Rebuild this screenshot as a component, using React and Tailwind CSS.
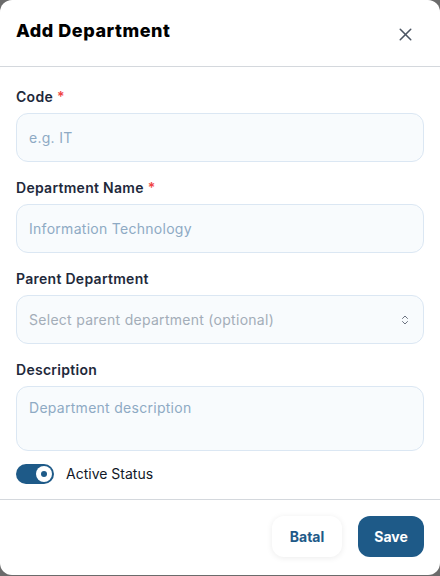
import React, { useState } from "react";
import { X, ChevronsUpDown } from "lucide-react";

const Label = ({ children, required }) => (
  <label className="block text-[14px] font-semibold tracking-[0.02em] text-[#1e293b] leading-5">
    {children}
    {required && <span className="ml-1 text-[#ef4444]">*</span>}
  </label>
);

const inputCls =
  "mt-1.5 w-full h-[49px] rounded-xl border border-[#dbe7f3] bg-[#f8fbfd] px-3 text-[14px] tracking-[0.02em] outline-none placeholder:text-[#8eaac4]";

const AddDepartment = () => {
  const [active, setActive] = useState(true);

  return (
    <div
      className="h-[576px] w-[440px] bg-[#6b6b6b]"
      style={{ fontFamily: "Inter, 'Noto Sans', sans-serif" }}
    >
      <div className="flex h-[575px] flex-col rounded-xl bg-white">
        <div className="flex h-[67px] items-start justify-between border-b border-[#d4d8dd] px-4 pt-[17px]">
          <h2 className="text-[18px] font-extrabold tracking-[0.03em] text-black">
            Add Department
          </h2>
          <button className="mt-[7px] mr-[8px] text-[#4b5563]">
            <X size={21} strokeWidth={1.75} />
          </button>
        </div>

        <div className="flex flex-col gap-4 px-4 pt-[20px]">
          <div>
            <Label required>Code</Label>
            <input className={inputCls} placeholder="e.g. IT" />
          </div>
          <div>
            <Label required>Department Name</Label>
            <input className={inputCls} placeholder="Information Technology" />
          </div>
          <div>
            <Label>Parent Department</Label>
            <div className="mt-1.5 flex h-[49px] w-full items-center justify-between rounded-xl border border-[#dbe7f3] bg-[#f8fbfd] px-3">
              <span className="text-[14px] tracking-[0.02em] text-[#a3adb8]">
                Select parent department (optional)
              </span>
              <ChevronsUpDown size={12} className="text-[#6b7280]" />
            </div>
          </div>
          <div>
            <Label>Description</Label>
            <textarea
              className="mt-1.5 block h-[65px] w-full resize-none rounded-xl border border-[#dbe7f3] bg-[#f8fbfd] px-3 py-2.5 text-[14px] tracking-[0.02em] outline-none placeholder:text-[#8eaac4]"
              placeholder="Department description"
            />
          </div>
        </div>

        <div className="flex items-center gap-3 px-4 pt-[12px] pb-[15px]">
          <button
            onClick={() => setActive(!active)}
            className="flex h-5 w-[38px] items-center justify-end rounded-full bg-[#1e5a88] px-[2px]"
          >
            <span className="flex h-4 w-4 items-center justify-center rounded-full bg-white">
              <span className="h-1.5 w-1.5 rounded-full bg-[#1e5a88]" />
            </span>
          </button>
          <span className="text-[14px] text-[#111827]">Active Status</span>
        </div>

        <div className="flex justify-end gap-4 border-t border-[#d4d8dd] px-4 pt-4">
          <button className="h-[41px] w-[70px] rounded-xl bg-white text-[14px] font-bold text-[#1e5a88] shadow-[0_1px_6px_rgba(0,0,0,0.08)]">
            Batal
          </button>
          <button className="h-[41px] w-[66px] rounded-xl bg-[#1e5a88] text-[14px] font-bold text-white">
            Save
          </button>
        </div>
      </div>
    </div>
  );
};

export default AddDepartment;
